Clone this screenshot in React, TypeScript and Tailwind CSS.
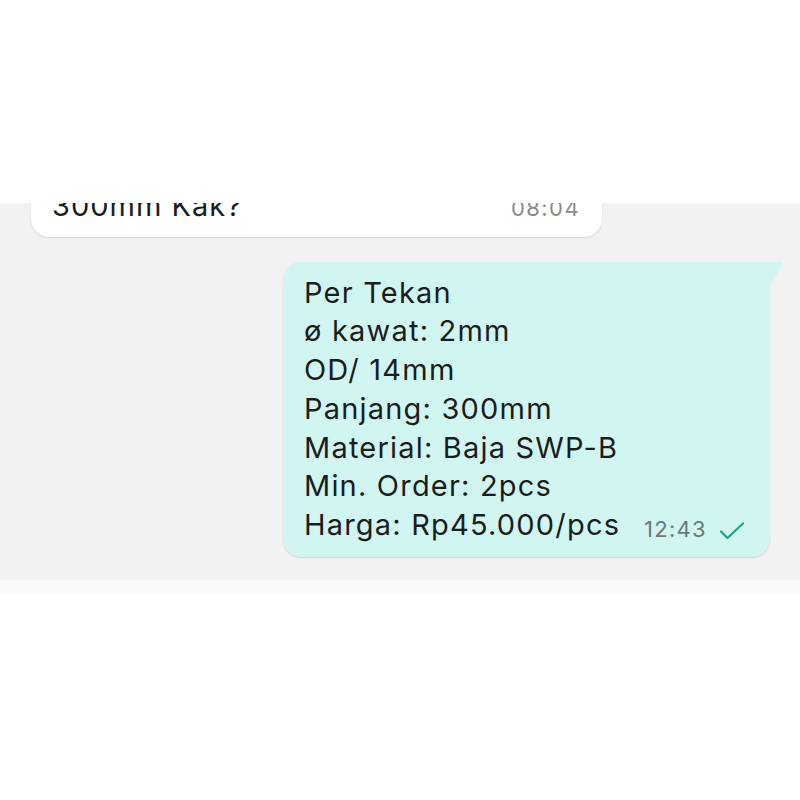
import React from 'react';

const LINES = [
  'Per Tekan',
  'ø kawat: 2mm',
  'OD/ 14mm',
  'Panjang: 300mm',
  'Material: Baja SWP-B',
  'Min. Order: 2pcs',
];

function Check() {
  return (
    <svg width="26" height="18" viewBox="0 0 26 18" fill="none" className="text-[#1fa38c]">
      <path d="M2 9.5 L8.5 16 L24 1.5" stroke="currentColor" strokeWidth="2.2" strokeLinecap="round" strokeLinejoin="round" />
    </svg>
  );
}

export default function App() {
  return (
    <div className="w-[800px] h-[800px] bg-white font-['Inter','Liberation_Sans',sans-serif] text-[#1b1d1d] overflow-hidden">
      <div className="h-[203px] bg-white" />

      <div className="h-[377px] bg-[#f2f2f2] overflow-hidden flex flex-col">
        {/* incoming, scrolled off the top */}
        <div className="-mt-[28px] ml-[31px] w-[571px] rounded-[18px] bg-white shadow-[0_1px_1.5px_rgba(0,0,0,0.13)] pl-[21px] pr-[22px] pt-[12px] pb-[9px]">
          <div className="flex items-baseline text-[29px] leading-[38.7px] tracking-[1px]">
            <span>300mm Kak?</span>
            <span className="ml-auto text-[22px] tracking-[1.4px] text-[#8b8d8d]">08:04</span>
          </div>
        </div>

        {/* outgoing */}
        <div className="relative mt-[25px] ml-auto mr-[30px] w-[487px] rounded-[18px] rounded-tr-none bg-[#d1f5f0] shadow-[0_1px_1.5px_rgba(0,0,0,0.13)] pl-[21px] pr-[25px] pt-[12px] pb-[10px]">
          <svg className="absolute left-full top-0" width="14" height="24" viewBox="0 0 14 24">
            <path d="M0 0 H10.5 Q14 0 12.2 2.8 L0 23 Z" fill="#d1f5f0" />
          </svg>
          <div className="text-[29px] leading-[38.7px] tracking-[1.2px]">
            {LINES.map((l) => (
              <div key={l}>{l}</div>
            ))}
            <div className="flex items-baseline">
              <span>Harga: Rp45.000/pcs</span>
              <span className="ml-auto flex items-baseline gap-[12px] translate-y-[2px]">
                <span className="text-[22px] tracking-[1.3px] text-[#6b7a78]">12:43</span>
                <span className="self-center translate-y-[2px]"><Check /></span>
              </span>
            </div>
          </div>
        </div>
      </div>

      <div className="h-[14px] bg-[#fafafa]" />
    </div>
  );
}
